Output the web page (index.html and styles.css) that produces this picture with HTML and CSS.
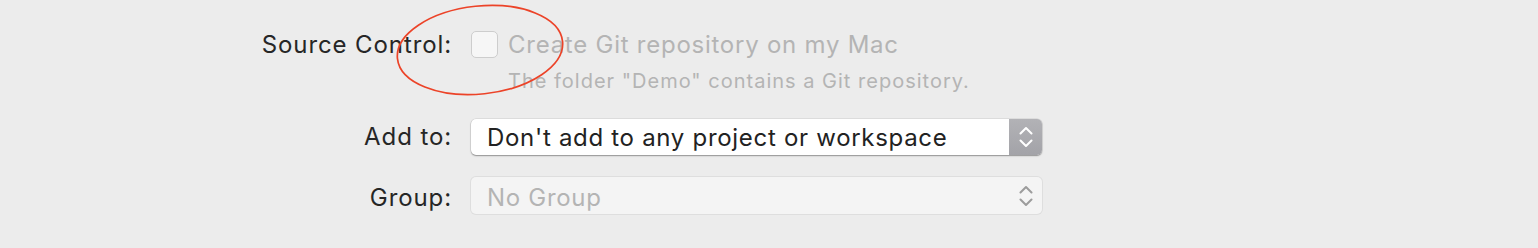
FILE: index.html
```html
<!DOCTYPE html>
<html>
<head>
<meta charset="utf-8">
<link rel="stylesheet" href="styles.css">
</head>
<body>
<div class="form">
  <div class="label l1">Source Control:</div>
  <div class="ctrl c1">
    <div class="checkrow">
      <span class="checkbox"></span>
      <span class="checktext">Create Git repository on my Mac</span>
    </div>
    <div class="subtext">The folder "Demo" contains a Git repository.</div>
    <svg class="annot" width="180" height="100" viewBox="0 0 180 100">
      <ellipse cx="90" cy="50" rx="83" ry="44" transform="rotate(-6 90 50)" fill="none" stroke="#ec4328" stroke-width="1.7"/>
    </svg>
  </div>

  <div class="label l2">Add to:</div>
  <div class="ctrl">
    <div class="popup">
      <span class="ptext">Don't add to any project or workspace</span>
      <span class="stepper">
        <svg width="16" height="26" viewBox="0 0 16 26"><path d="M2.5 9.5 L8 4 L13.5 9.5 M2.5 16.5 L8 22 L13.5 16.5" fill="none" stroke="#fff" stroke-width="2" stroke-linecap="round" stroke-linejoin="round"/></svg>
      </span>
    </div>
  </div>

  <div class="label l3">Group:</div>
  <div class="ctrl">
    <div class="popup disabled">
      <span class="ptext">No Group</span>
      <span class="stepper">
        <svg width="16" height="26" viewBox="0 0 16 26"><path d="M2.5 9.5 L8 4 L13.5 9.5 M2.5 16.5 L8 22 L13.5 16.5" fill="none" stroke="#9c9c9c" stroke-width="2" stroke-linecap="round" stroke-linejoin="round"/></svg>
      </span>
    </div>
  </div>
</div>
</body>
</html>
```

FILE: styles.css
```css
html, body {
  margin: 0;
  padding: 0;
  background: #ececec;
  width: 1538px;
  height: 248px;
  overflow: hidden;
}
body {
  font-family: "Inter", "Helvetica Neue", "Liberation Sans", sans-serif;
  -webkit-font-smoothing: antialiased;
}
.form {
  display: grid;
  grid-template-columns: 452px 571px;
  column-gap: 19px;
  padding-top: 31px;
}
.label {
  text-align: right;
  font-size: 24px;
  letter-spacing: 0.9px;
  color: #262626;
  line-height: 27px;
}
.ctrl {
  position: relative;
}
.checkrow {
  display: flex;
  align-items: center;
  gap: 10px;
  height: 27px;
}
.checkbox {
  width: 25px;
  height: 25px;
  border: 1px solid #cdcdcd;
  border-radius: 5px;
  background: #f6f6f6;
  flex: none;
}
.checktext {
  font-size: 24px;
  letter-spacing: 0.75px;
  color: #b4b4b4;
  line-height: 27px;
}
.subtext {
  margin-left: 37px;
  font-size: 20px;
  letter-spacing: 1px;
  color: #b4b4b4;
  line-height: 24px;
  margin-top: 11px;
}
.annot {
  position: absolute;
  left: -81px;
  top: -31px;
}
.l2 { margin-top: 26px; line-height: 36px; }
.ctrl:nth-child(4) { margin-top: 26px; }
.l3 { margin-top: 22px; line-height: 38px; padding-top: 2px; }
.ctrl:nth-child(6) { margin-top: 22px; }
.popup {
  display: flex;
  align-items: center;
  height: 36px;
  background: #fff;
  border-radius: 5px;
  box-shadow: 0 0 0 0.5px rgba(0,0,0,0.12), 0 1px 1.5px rgba(0,0,0,0.35);
  overflow: hidden;
}
.ptext {
  flex: 1;
  padding-left: 16px;
  font-size: 24px;
  letter-spacing: 0.7px;
  color: #222;
}
.stepper {
  width: 33px;
  height: 100%;
  display: flex;
  align-items: center;
  justify-content: center;
  background: linear-gradient(#b2b2b6, #a3a3a8);
}
.popup.disabled {
  height: 37px;
  background: #f4f4f4;
  box-shadow: 0 0 0 1px #dedede;
}
.popup.disabled .ptext { color: #b4b4b4; padding-top: 3px; }
.popup.disabled .stepper { background: transparent; }
```
